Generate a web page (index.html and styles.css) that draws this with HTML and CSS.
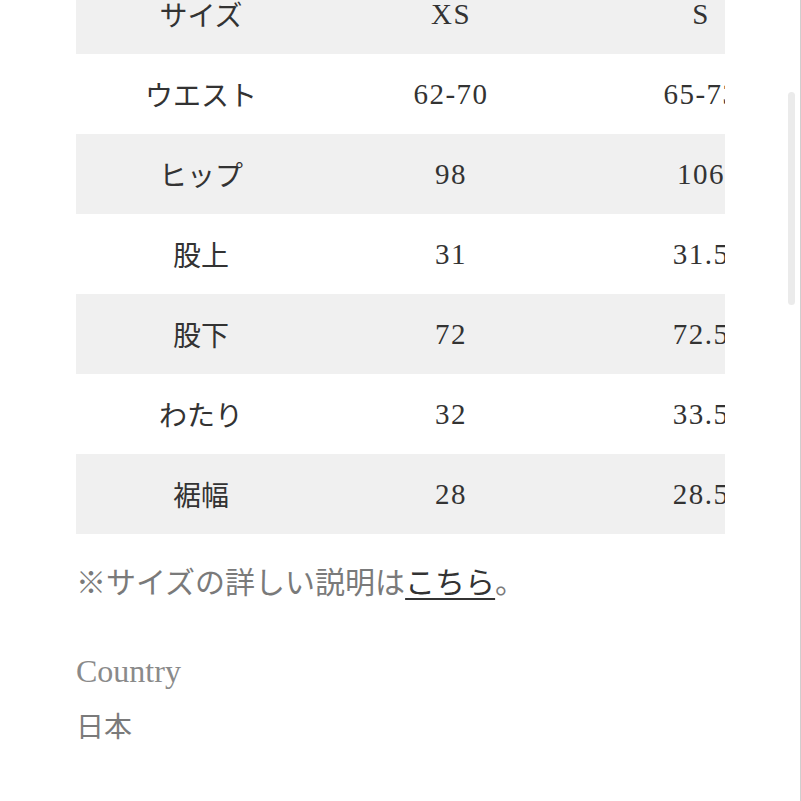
FILE: index.html
```html
<!DOCTYPE html>
<html lang="ja">
<head>
<meta charset="utf-8">
<link rel="stylesheet" href="styles.css">
</head>
<body>
<div class="page">
  <div class="table-wrap">
    <table class="size-table">
      <tr class="shade"><td class="label">サイズ</td><td>XS</td><td>S</td></tr>
      <tr><td class="label">ウエスト</td><td>62-70</td><td>65-73</td></tr>
      <tr class="shade"><td class="label">ヒップ</td><td>98</td><td>106</td></tr>
      <tr><td class="label">股上</td><td>31</td><td>31.5</td></tr>
      <tr class="shade"><td class="label">股下</td><td>72</td><td>72.5</td></tr>
      <tr><td class="label">わたり</td><td>32</td><td>33.5</td></tr>
      <tr class="shade"><td class="label">裾幅</td><td>28</td><td>28.5</td></tr>
    </table>
  </div>
  <p class="note">※サイズの詳しい説明は<a class="link" href="#">こちら</a>。</p>
  <div class="spec">
    <div class="spec-title">Country</div>
    <div class="spec-value">日本</div>
  </div>
</div>
<div class="scroll-thumb"></div>
</body>
</html>
```

FILE: styles.css
```css
html, body {
  margin: 0;
  padding: 0;
  background: #ffffff;
}

body {
  width: 800px;
  height: 801px;
  border-right: 1px solid #cfcfcf;
  overflow: hidden;
  position: relative;
}

.page {
  padding-left: 76px;
}

.table-wrap {
  width: 649px;
  overflow: hidden;
  margin-top: -26px;
}

.size-table {
  border-collapse: collapse;
  width: 750px;
  table-layout: fixed;
}

.size-table td {
  height: 80px;
  padding: 0;
  text-align: center;
  vertical-align: middle;
  font-family: "Liberation Serif", "Times New Roman", serif;
  font-size: 29px;
  letter-spacing: 1.5px;
  color: #333333;
}

.size-table td.label {
  font-family: "Noto Sans CJK JP", "Noto Sans", sans-serif;
  font-size: 28px;
  letter-spacing: 0;
  color: #333333;
}

.size-table tr.shade td {
  background: #f0f0f0;
}

.note {
  margin: 26px 0 0 0;
  font-family: "Noto Sans CJK JP", "Noto Sans", sans-serif;
  font-size: 30px;
  line-height: 40px;
  color: #7a7a7a;
}

.link {
  color: #333333;
  text-decoration: underline;
  text-underline-offset: 5px;
  text-decoration-thickness: 2px;
}

.spec {
  margin-top: 51px;
}

.spec-title {
  font-family: "Liberation Serif", "Times New Roman", serif;
  font-size: 32px;
  line-height: 40px;
  color: #8a8a8a;
}

.spec-value {
  margin-top: 14px;
  font-family: "Noto Sans CJK JP", "Noto Sans", sans-serif;
  font-size: 28px;
  line-height: 40px;
  color: #7a7a7a;
}

.scroll-thumb {
  position: absolute;
  left: 788px;
  top: 92px;
  width: 7px;
  height: 213px;
  border-radius: 4px;
  background: #ebebeb;
}
```
